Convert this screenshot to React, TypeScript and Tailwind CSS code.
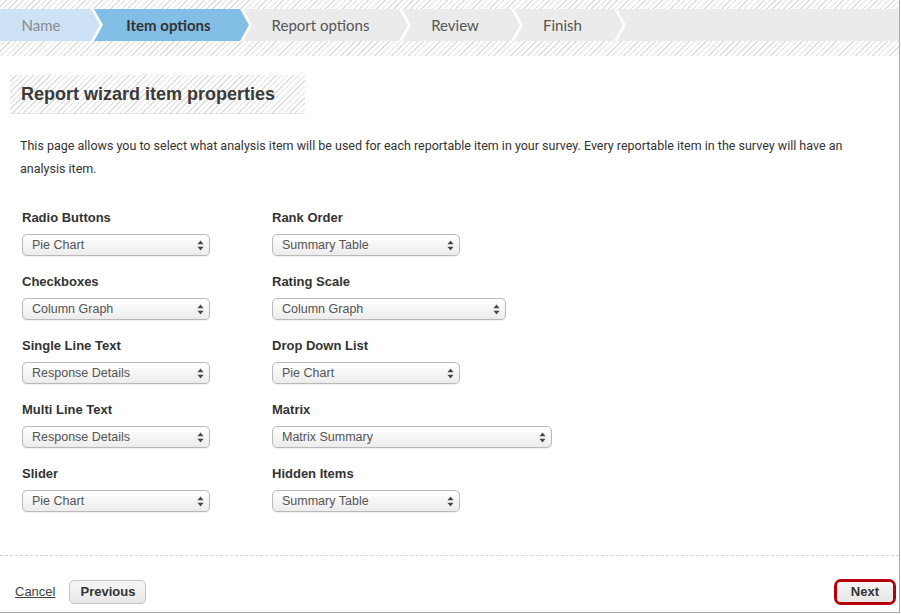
import React from "react";

const stripe =
  "bg-[repeating-linear-gradient(135deg,#dedede_0px,#dedede_1px,#ffffff_1px,#ffffff_4px)]";

function Steps() {
  return (
    <div className="flex h-[32px] bg-white" style={{ fontFamily: "Lato, 'Open Sans', sans-serif" }}>
      <div className="w-[100px] shrink-0 bg-[#cde3f5] text-[#8a8a8a] flex items-center justify-center pr-[18px] text-[15px] [clip-path:polygon(0_0,91px_0,100px_50%,91px_100%,0_100%)]">
        Name
      </div>
      <div className="-ml-[6px] w-[155px] shrink-0 bg-[#82bee6] text-[#333] font-bold flex items-center justify-center pr-[6px] text-[15px] [clip-path:polygon(0_0,146px_0,155px_50%,146px_100%,0_100%,9px_50%)]">
        Item options
      </div>
      <div className="-ml-[6px] w-[165px] shrink-0 bg-[#ebebeb] text-[#555] flex items-center justify-center pr-[10px] text-[15px] [clip-path:polygon(0_0,156px_0,165px_50%,156px_100%,0_100%,9px_50%)]">
        Report options
      </div>
      <div className="-ml-[6px] w-[118px] shrink-0 bg-[#ebebeb] text-[#555] flex items-center justify-center pr-[12px] text-[15px] [clip-path:polygon(0_0,109px_0,118px_50%,109px_100%,0_100%,9px_50%)]">
        Review
      </div>
      <div className="-ml-[6px] w-[109px] shrink-0 bg-[#ebebeb] text-[#555] flex items-center justify-center pr-[12px] text-[15px] [clip-path:polygon(0_0,100px_0,109px_50%,100px_100%,0_100%,9px_50%)]">
        Finish
      </div>
      <div className="-ml-[6px] flex-1 bg-[#ebebeb] [clip-path:polygon(0_0,100%_0,100%_100%,0_100%,9px_50%)]" />
    </div>
  );
}

function Arrows() {
  return (
    <svg width="7" height="11" viewBox="0 0 7 11" className="shrink-0">
      <path d="M3.5 0.5 L6.5 4.2 L0.5 4.2 Z" fill="#444" />
      <path d="M3.5 10.5 L6.5 6.8 L0.5 6.8 Z" fill="#444" />
    </svg>
  );
}

function Select({ value, w }: { value: string; w: string }) {
  return (
    <div
      className={`${w} h-[22px] rounded-[5px] border border-[#b9b9b9] bg-[linear-gradient(#ffffff,#ececec)] flex items-center justify-between pl-[9px] pr-[5px] text-[12.5px] text-[#555] shadow-[0_1px_1px_rgba(0,0,0,0.06)]`}
    >
      <span>{value}</span>
      <Arrows />
    </div>
  );
}

function Field({ label, value, w }: { label: string; value: string; w: string }) {
  return (
    <div className="h-[64px]">
      <div className="font-bold text-[13px] text-[#333] leading-[16px] pt-[1px]">{label}</div>
      <div className="mt-[8px]">
        <Select value={value} w={w} />
      </div>
    </div>
  );
}

export default function App() {
  return (
    <div
      className="w-[900px] h-[613px] border-r border-b border-[#a9a9a9] bg-white flex flex-col overflow-hidden"
      style={{ fontFamily: "'Liberation Sans', Arial, sans-serif" }}
    >
      <div className={`${stripe} pt-[9px] pb-[15px]`}>
        <Steps />
      </div>

      <div className="pl-[10px] pt-[19px]">
        <div className={`${stripe} w-[295px] h-[39px] border-b border-[#e6e6e6] flex items-center pl-[11px]`}>
          <span className="text-[18px] font-bold text-[#3a3a3a]">Report wizard item properties</span>
        </div>
      </div>

      <p
        className="pl-[20px] pr-[50px] mt-[20px] text-[12.5px] leading-[23px] text-[#333]"
        style={{ fontFamily: "Roboto, 'Open Sans', sans-serif" }}
      >
        This page allows you to select what analysis item will be used for each reportable item in your survey. Every
        reportable item in the survey will have an analysis item.
      </p>

      <div className="flex pl-[22px] mt-[29px]">
        <div className="w-[250px]">
          <Field label="Radio Buttons" value="Pie Chart" w="w-[188px]" />
          <Field label="Checkboxes" value="Column Graph" w="w-[188px]" />
          <Field label="Single Line Text" value="Response Details" w="w-[188px]" />
          <Field label="Multi Line Text" value="Response Details" w="w-[188px]" />
          <Field label="Slider" value="Pie Chart" w="w-[188px]" />
        </div>
        <div>
          <Field label="Rank Order" value="Summary Table" w="w-[188px]" />
          <Field label="Rating Scale" value="Column Graph" w="w-[234px]" />
          <Field label="Drop Down List" value="Pie Chart" w="w-[188px]" />
          <Field label="Matrix" value="Matrix Summary" w="w-[280px]" />
          <Field label="Hidden Items" value="Summary Table" w="w-[188px]" />
        </div>
      </div>

      <div className="mt-auto border-t border-dashed border-[#d6d6d6] h-[57px] flex items-end pl-[15px] pr-[3px] pb-[8px]">
        <a className="text-[13px] text-[#444] underline mb-[3px]">Cancel</a>
        <button className="ml-[14px] h-[24px] px-[10px] rounded-[5px] border border-[#c4c4c4] bg-[linear-gradient(#f6f6f6,#e8e8e8)] text-[13px] font-bold text-[#333]">
          Previous
        </button>
        <div className="ml-auto rounded-[7px] border-[3px] border-[#b5000a] -mb-[1px]">
          <button className="h-[20px] px-[14px] rounded-[4px] bg-[linear-gradient(#f4f4f4,#e6e6e6)] text-[13px] font-bold text-[#333] flex items-center">
            Next
          </button>
        </div>
      </div>
    </div>
  );
}
